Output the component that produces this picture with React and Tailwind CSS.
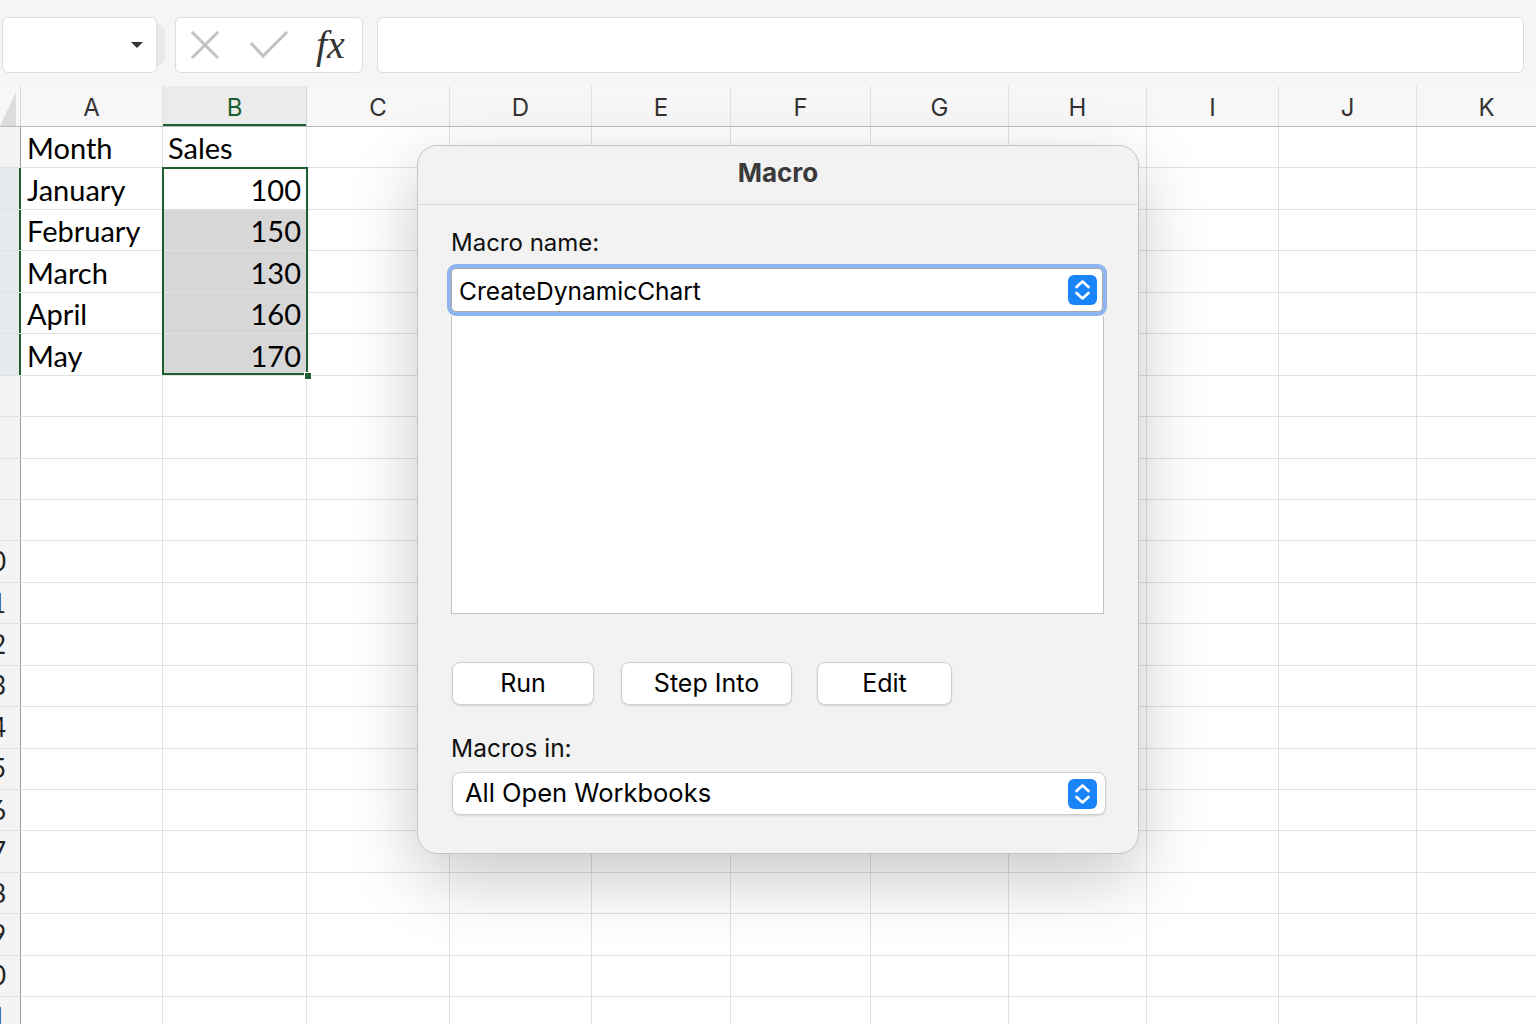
import React from 'react';

// column widths in px, after the 21px row-header strip
const columns = [
    { key: 'A', w: 142 },
    { key: 'B', w: 144 },
    { key: 'C', w: 143 },
    { key: 'D', w: 142 },
    { key: 'E', w: 139 },
    { key: 'F', w: 140 },
    { key: 'G', w: 138 },
    { key: 'H', w: 138 },
    { key: 'I', w: 132 },
    { key: 'J', w: 138 },
    { key: 'K', w: 140 },
];

const data = [
    ['Month', 'Sales'],
    ['January', 100],
    ['February', 150],
    ['March', 130],
    ['April', 160],
    ['May', 170],
];

const cellFont = { fontFamily: 'Lato, "Open Sans", sans-serif' };
const uiFont = { fontFamily: 'Inter, "Liberation Sans", sans-serif' };

const Stepper = () => (
    <svg width="29" height="30" viewBox="0 0 29 30">
        <rect x="0" y="0" width="29" height="30" rx="6" fill="#1a84fa" />
        <path d="M8.5 12 L14.5 6.5 L20.5 12" fill="none" stroke="#fff" strokeWidth="2.6" strokeLinecap="round" strokeLinejoin="round" />
        <path d="M8.5 18 L14.5 23.5 L20.5 18" fill="none" stroke="#fff" strokeWidth="2.6" strokeLinecap="round" strokeLinejoin="round" />
    </svg>
);

const Toolbar = () => (
    <div className="h-[86px] bg-[#f5f5f5] flex items-start pt-[17px] pl-[2px] pr-[12px]">
        <div className="w-[155px] h-[56px] bg-white border border-[#dcdcdc] rounded-[6px] flex items-center justify-end pr-[12px]">
            <svg width="14" height="8" viewBox="0 0 14 8"><path d="M1 1 L13 1 L7 7 Z" fill="#333" /></svg>
        </div>
        <div className="mt-[7px] w-[8px] h-[42px] bg-[#e9e9e9] rounded-r-[8px]" />
        <div className="ml-[10px] w-[188px] h-[56px] bg-white border border-[#dcdcdc] rounded-[6px] flex items-center">
            <svg className="ml-[13px]" width="32" height="32" viewBox="0 0 32 32">
                <path d="M3 3 L29 29 M29 3 L3 29" stroke="#c2c2c2" strokeWidth="3" />
            </svg>
            <svg className="ml-[28px]" width="40" height="30" viewBox="0 0 40 30">
                <path d="M2 13 L14 26 L38 2" fill="none" stroke="#c2c2c2" strokeWidth="3" />
            </svg>
            <span className="ml-[27px] text-[40px] italic text-[#333] leading-none" style={{ fontFamily: '"Liberation Serif", serif' }}>fx</span>
        </div>
        <div className="ml-[14px] flex-1 h-[56px] bg-white border border-[#dcdcdc] rounded-[6px]" />
    </div>
);

const HeaderRow = () => (
    <div className="flex h-[41px] bg-[#f7f7f7] border-b border-[#b9b9b9]" style={uiFont}>
        <div className="w-[21px] shrink-0 border-r border-[#d6d6d6] flex items-end">
            <svg width="16" height="34" viewBox="0 0 16 34"><path d="M0 34 L16 34 L16 0 Z" fill="#dcdcdc" /></svg>
        </div>
        {columns.map(c => (
            <div
                key={c.key}
                style={{ width: c.w }}
                className={
                    c.key === 'B'
                        ? 'shrink-0 flex items-center justify-center pt-[3px] text-[24px] text-[#1d5e2f] bg-[#ebebeb] border-r border-[#d6d6d6] shadow-[inset_0_-2px_0_#1d5e2f]'
                        : 'shrink-0 flex items-center justify-center pt-[3px] text-[24px] text-[#333] border-r border-[#e0e0e0]'
                }
            >
                {c.key}
            </div>
        ))}
    </div>
);

const GridRow = ({ n }) => {
    const row = data[n - 1];
    const selected = n >= 2 && n <= 6;
    const label = n - 1;
    return (
        <div className="flex h-[41.45px] border-b border-[#e1e1e1]" style={cellFont}>
            <div className={`w-[21px] shrink-0 overflow-hidden flex ${selected ? 'bg-[#e6eaed] border-r-2 border-[#1d5e2f]' : 'bg-[#f4f4f4] border-r border-[#9e9e9e]'}`}>
                <div className="w-[60px] shrink-0 ml-[-39px] flex items-center justify-center text-[26px] text-[#222]">{label >= 10 ? label : ''}</div>
            </div>
            {columns.map(c => {
                let content = null;
                let cls = 'shrink-0 flex items-center pt-[2px] border-r border-[#e1e1e1] text-[29px] text-black';
                if (row && c.key === 'A') {
                    content = row[0];
                    cls += ' pl-[6px]';
                }
                if (row && c.key === 'B') {
                    content = row[1];
                    cls += n === 1 ? ' pl-[5px]' : ' justify-end pr-[5px]';
                    if (n >= 3) cls += ' bg-[#d7d7d7]';
                }
                return (
                    <div key={c.key} style={{ width: c.w }} className={cls}>
                        {content}
                    </div>
                );
            })}
        </div>
    );
};

const btn = 'h-[43px] bg-white border border-[#cfcfcf] rounded-[8px] shadow-[0_1px_2px_rgba(0,0,0,0.12)] text-[25px] text-black';

const MacroDialog = () => (
    <div
        className="absolute left-[417px] top-[145px] w-[722px] h-[709px] bg-[#f2f2f2] border border-[#c4c4c4] rounded-[20px] shadow-[0_24px_70px_rgba(0,0,0,0.22)] flex flex-col"
        style={uiFont}
    >
        <div className="h-[59px] shrink-0 flex items-center justify-center pb-[5px] border-b border-[#d9d9d9]">
            <span className="text-[26px] font-bold text-[#3a3a3a]">Macro</span>
        </div>
        <div className="pl-[33px] pr-[35px] pt-[24px] flex flex-col">
            <div className="text-[24px] leading-[28px] text-[#111]">Macro name:</div>
            <div className="mt-[11px] relative z-10 h-[44px] bg-white border border-[#a9a9a9] rounded-[5px] ring-4 ring-[#8fb5ef] flex items-center justify-between pl-[7px] pr-[5px]">
                <span className="text-[24.5px] pt-[2px] text-black">CreateDynamicChart</span>
                <Stepper />
            </div>
            <div className="mt-[4px] h-[298px] bg-white border border-[#c3c3c3] border-t-0 mr-[-1px]" />
            <div className="mt-[48px] flex items-center">
                <button className={`${btn} w-[142px] ml-[1px]`}>Run</button>
                <button className={`${btn} ml-[27px] w-[171px]`}>Step Into</button>
                <button className={`${btn} ml-[25px] w-[135px]`}>Edit</button>
            </div>
            <div className="mt-[29px] text-[24.5px] leading-[28px] text-[#111]">Macros in:</div>
            <div className="mt-[10px] ml-[1px] mr-[-3px] h-[43px] bg-white border border-[#cfcfcf] rounded-[8px] shadow-[0_1px_2px_rgba(0,0,0,0.12)] flex items-center justify-between pl-[12px] pr-[8px]">
                <span className="text-[25.5px] text-black">All Open Workbooks</span>
                <Stepper />
            </div>
        </div>
    </div>
);

const App = () => {
    const rows = Array.from({ length: 22 }, (_, i) => i + 1);
    return (
        <div className="relative w-[1536px] h-[1024px] overflow-hidden bg-white">
            <Toolbar />
            <div className="relative">
                <HeaderRow />
                {rows.map(n => <GridRow key={n} n={n} />)}
                {/* selection outline over B2:B6 */}
                <div className="absolute left-[162px] top-[81px] w-[146px] h-[208px] border-2 border-[#1d5e2f] pointer-events-none" />
                <div className="absolute left-[304px] top-[286px] w-[8px] h-[8px] bg-[#1d5e2f] border border-white" />
            </div>
            <MacroDialog />
        </div>
    );
};

export default App;
